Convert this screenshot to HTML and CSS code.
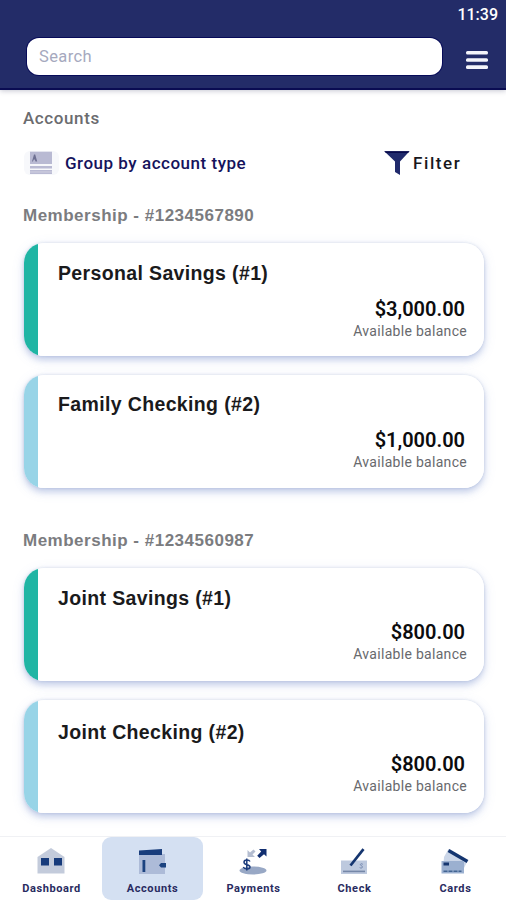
FILE: index.html
```
<!DOCTYPE html>
<html lang="en">
<head>
<meta charset="utf-8">
<title>Accounts</title>
<link rel="stylesheet" href="styles.css">
</head>
<body>
<div class="app">
  <header class="header">
    <div class="clock">11:39</div>
    <div class="header-row">
      <div class="search">Search</div>
      <svg class="menu" viewBox="0 0 24 22" width="24" height="22"><g fill="#f4f4fa"><rect x="1" y="2" width="22" height="3.600" rx="1.500"/><rect x="1" y="9.200" width="22" height="3.600" rx="1.500"/><rect x="1" y="16.300" width="22" height="3.600" rx="1.500"/></g></svg>
    </div>
  </header>
  <main class="main">
    <h1 class="title">Accounts</h1>
    <div class="tools">
      <div class="group">
        <svg width="36" height="26" viewBox="0 0 36 26"><rect x="0" y="1" width="35" height="24" rx="6" fill="#f7f8fb"/><g fill="#b9bad3"><rect x="6" y="1.700" width="22" height="12.300"/><rect x="6" y="16" width="22" height="2.500"/><rect x="6" y="20" width="22" height="4"/></g><path d="M6 22h22" stroke="#d8d8e6" stroke-width=".8"/><path d="M8 11.500l2-7 1.200 0 2 7h-1.700l-.7-2h-1l-1 2z" fill="#6e7092"/></svg>
        <span class="group-label">Group by account type</span>
      </div>
      <div class="filter">
        <svg width="26" height="26" viewBox="0 0 26 26"><path d="M.3 1.200H25.500L16 11.500V25L11 22V11.500z" fill="#202a6c"/><path d="M.3 1.200H25.500L24 3H2z" fill="#080b4c"/></svg>
        <span class="filter-label">Filter</span>
      </div>
    </div>
    <section class="membership">
      <h2 class="member-title">Membership - #1234567890</h2>
      <article class="card savings"><h3 class="name">Personal Savings (#1)</h3><div class="amount">$3,000.00</div><div class="caption">Available balance</div></article>
      <article class="card checking raised"><h3 class="name">Family Checking (#2)</h3><div class="amount">$1,000.00</div><div class="caption">Available balance</div></article>
    </section>
    <section class="membership">
      <h2 class="member-title">Membership - #1234560987</h2>
      <article class="card savings"><h3 class="name">Joint Savings (#1)</h3><div class="amount tight">$800.00</div><div class="caption">Available balance</div></article>
      <article class="card checking"><h3 class="name low">Joint Checking (#2)</h3><div class="amount tight">$800.00</div><div class="caption">Available balance</div></article>
    </section>
  </main>
  <nav class="nav">
    <div class="tab">
      <svg width="32" height="32" viewBox="0 0 32 32"><path d="M2.500 11L16 2l13.500 9v16.500h-27z" fill="#c3cbdb"/><path d="M6 12h8v7.500H6zM19 12h8v7.500h-8z" fill="#173b7b"/></svg>
      <span>Dashboard</span>
    </div>
    <div class="tab active">
      <svg width="32" height="32" viewBox="0 0 32 32"><path d="M3 8h26v20H3z" fill="#adbbd8"/><path d="M3 4.500L26 3v6H3z" fill="#193d7c"/><path d="M6.500 14h2.800v12H6.500zM25 17h5v4.500h-5l-2-2.200z" fill="#1b4380"/></svg>
      <span>Accounts</span>
    </div>
    <div class="tab">
      <svg width="32" height="32" viewBox="0 0 32 32"><ellipse cx="16" cy="24.500" rx="13.500" ry="4" fill="#98a8c5"/><path d="M10.500 4v7H18L15.500 8.500 18.500 5.500 16.500 3.500 13 6.500z" fill="#b4bdd0"/><path d="M22 3h7.500v7.500L27 8.200 22.500 12 20.200 9.800 24.200 5.500z" fill="#112e70"/><path d="M13 15.500c-1-2-6-2-6 .8 0 3.200 6 1.900 6 4.700 0 2.600-5.500 2.600-6.800 0M9.800 12.500v12" fill="none" stroke="#1c3c7c" stroke-width="1.500"/></svg>
      <span>Payments</span>
    </div>
    <div class="tab">
      <svg width="32" height="32" viewBox="0 0 32 32"><path d="M3 14.500h26V28H3z" fill="#bdc9de"/><path d="M5 25.400h22" stroke="#7587a8" stroke-width="1.600"/><path d="M24.800 18.300c-2-1.500-3.400.5-1.500 1.400 2.500 1 .5 3.300-1.600 1.900" fill="none" stroke="#7186ae"/><path d="M12.500 19.500L25.500 3.200" stroke="#15356f" stroke-width="2.700"/></svg>
      <span>Check</span>
    </div>
    <div class="tab">
      <svg width="32" height="32" viewBox="0 0 32 32"><path d="M9.500 3L28.500 15 24 24H4l1-13z" fill="#cbd6e8"/><path d="M9.500 4.500L28.500 15.500" stroke="#14356f" stroke-width="3.400"/><path d="M2.500 15H25v12.500H2.500z" fill="#9bb0d0"/><path d="M4.500 16.500h5.500v3H4.500z" fill="#16366f"/><path d="M4.500 25.300h18" stroke="#426492" stroke-width="1.500" stroke-dasharray="4 1"/></svg>
      <span>Cards</span>
    </div>
  </nav>
</div>
</body>
</html>
```
FILE: styles.css
```
* { box-sizing: border-box; }
body { margin: 0; background: #fff; font-family: Roboto, "Liberation Sans", sans-serif; }
h1, h2, h3 { margin: 0; }
svg { display: block; flex: none; }
.app { width: 506px; height: 900px; display: flex; flex-direction: column; overflow: hidden; }
.header { height: 90px; flex: none; background: #232c68; border-bottom: 2px solid #0a0c52; box-shadow: 0 1px 5px rgba(30, 35, 80, .25); }
.clock { height: 38px; padding: 5px 8px 0 0; text-align: right; color: #fff; font-size: 16px; font-weight: 500; line-height: 20px; }
.header-row { display: flex; align-items: center; gap: 23px; padding-left: 27px; }
.search { width: 415px; height: 37px; padding-left: 12px; border-radius: 12px; background: #fff; box-shadow: 0 0 0 1px #070b59; color: #a6a9be; font-size: 16.5px; line-height: 37px; letter-spacing: .4px; }
.menu { position: relative; top: 3px; }
.main { flex: 1; padding: 18px 22px 0 24px; }
.title { height: 20px; margin-left: -1px; color: #6b6c6f; font-size: 17px; font-weight: 500; line-height: 20px; letter-spacing: .6px; }
.tools { display: flex; justify-content: space-between; height: 26px; margin-top: 22px; }
.group, .filter { display: flex; align-items: center; }
.group { gap: 5px; }
.group-label { color: #15135c; font-size: 17px; font-weight: 500; letter-spacing: .52px; }
.filter { gap: 3px; width: 100px; }
.filter-label { color: #18181c; font-size: 17px; font-weight: 500; letter-spacing: 1.6px; }
.member-title { height: 20px; margin: 30px 0 17px -1px; color: #7b7c7f; font-family: "Liberation Sans", Arial, sans-serif; font-size: 17px; font-weight: 700; line-height: 20px; letter-spacing: .5px; }
.membership + .membership { padding-top: 13px; }
.card { width: 460px; height: 113px; padding: 18px 19px 0 34px; border-radius: 20px; background: linear-gradient(90deg, var(--accent) 14px, #fff 14px); box-shadow: 0 4px 6px rgba(91, 120, 190, .28), 0 0 3px rgba(80, 105, 150, .2), 0 3px 13px rgba(100, 130, 210, .14); }
.card + .card { margin-top: 19px; }
.card.raised { padding-top: 17px; }
.savings { --accent: #20b5a4; }
.checking { --accent: #98d4e7; }
.name { height: 24px; color: #1a1a1c; font-family: "Liberation Sans", Arial, sans-serif; font-size: 19.5px; font-weight: 700; line-height: 24px; letter-spacing: .36px; }
.name.low { padding-top: 2px; }
.amount { margin-top: 12px; text-align: right; color: #0c0c0e; font-size: 20px; font-weight: 600; line-height: 24px; }
.amount.tight { margin-top: 10px; }
.caption { margin-right: -2px; text-align: right; color: #68696d; font-size: 14px; line-height: 20px; letter-spacing: .3px; }
.nav { display: grid; grid-template-columns: repeat(5, 1fr); flex: none; height: 64px; padding-left: 1px; border-top: 1px solid #f0f1f4; }
.tab { display: flex; flex-direction: column; align-items: center; padding-top: 9px; color: #292b61; font-size: 11px; font-weight: 700; line-height: 16px; letter-spacing: .6px; }
.tab svg { margin-left: -2px; }
.tab span { margin-top: 3px; }
.active { background: #d4e0f2; border-radius: 9px; }
```
